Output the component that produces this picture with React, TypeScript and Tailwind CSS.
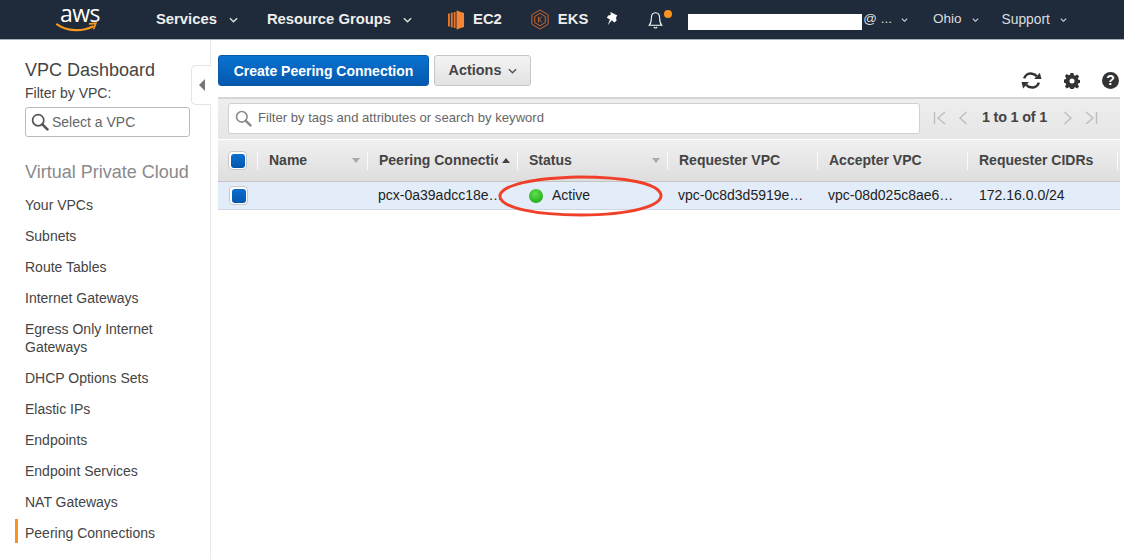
import React from "react";

const navItems = [
  "Your VPCs",
  "Subnets",
  "Route Tables",
  "Internet Gateways",
  "Egress Only Internet Gateways",
  "DHCP Options Sets",
  "Elastic IPs",
  "Endpoints",
  "Endpoint Services",
  "NAT Gateways",
  "Peering Connections",
];

const Caret = ({ className = "" }: { className?: string }) => (
  <svg viewBox="0 0 10 6" className={`w-[9px] h-[6px] ${className}`} fill="none">
    <path d="M1 1l4 4 4-4" stroke="currentColor" strokeWidth="1.6" />
  </svg>
);

const Search = ({ className = "" }: { className?: string }) => (
  <svg viewBox="0 0 18 18" className={className} fill="none">
    <circle cx="7.2" cy="7.2" r="5.6" stroke="currentColor" strokeWidth="1.7" />
    <path d="M11.4 11.4l5 5" stroke="currentColor" strokeWidth="2.6" strokeLinecap="round" />
  </svg>
);

const Checkbox = () => (
  <div className="w-[19px] h-[19px] rounded-[4px] border border-[#c8c8c8] bg-white flex items-center justify-center">
    <div className="w-[14px] h-[14px] rounded-[3px] bg-gradient-to-b from-[#0a6fd0] to-[#0457ab]" />
  </div>
);

const HeaderCell = ({
  label,
  width,
  sort,
}: {
  label: string;
  width: string;
  sort?: "down" | "up";
}) => (
  <div className={`${width} h-[18px] shrink-0 border-r border-[#fafafa] flex items-center pl-[11px] pr-[7px]`}>
    <span className="flex-1 overflow-hidden whitespace-nowrap font-bold text-[14px] text-[#444]">{label}</span>
    {sort === "down" && <span className="ml-1 w-0 h-0 border-x-[4px] border-x-transparent border-t-[5px] border-t-[#aaa]" />}
    {sort === "up" && <span className="ml-1 w-0 h-0 border-x-[4px] border-x-transparent border-b-[5px] border-b-[#444]" />}
  </div>
);

const App = () => {
  return (
    <div className="w-[1124px] h-[559px] overflow-hidden bg-white font-['Liberation_Sans',sans-serif] relative">
      {/* top bar */}
      <header className="h-[40px] bg-[#1f2b3a] border-b border-[#aab0b6] flex items-center text-white text-[14.8px]">
        <div className="ml-[57px] w-[99px] shrink-0 relative h-[39px]">
          <span className="absolute left-[3px] top-[0px] text-[23px] leading-[26px] tracking-[-0.5px] font-['Open_Sans',sans-serif]">aws</span>
          <svg viewBox="0 0 40 10" className="absolute left-[-1px] top-[22px] w-[42px] h-[11px]" fill="none">
            <path d="M1 2c10 7 24 7 34 2" stroke="#f7981d" strokeWidth="2" strokeLinecap="round" />
            <path d="M32 1.500l6-.5-2 5" stroke="#f7981d" strokeWidth="1.6" strokeLinecap="round" />
          </svg>
        </div>
        <span className="font-bold text-[#eee]">Services</span>
        <Caret className="ml-[12px] text-[#ddd]" />
        <span className="ml-[29px] font-bold text-[#eee]">Resource Groups</span>
        <Caret className="ml-[12px] text-[#ddd]" />
        <svg viewBox="0 0 18 20" className="ml-[36px] w-[17px] h-[20px]">
          <path d="M9 0l8 2.500v15L9 20z" fill="#f58536" />
          <path d="M0 3h2v14H0zM3 2.400h2v15.200H3zM6 1.600h2v16.800H6z" fill="#e8762b" />
        </svg>
        <span className="ml-[8px] font-bold text-[#eee]">EC2</span>
        <svg viewBox="0 0 20 22" className="ml-[28px] w-[20px] h-[21px]" fill="none" stroke="#d2682c">
          <path d="M10 1l8.500 5v10L10 21l-8.500-5V6z" strokeWidth="1" />
          <path d="M10 4.500l5.500 3.200v6.600L10 17.500l-5.500-3.200V7.700z" strokeWidth="1" />
          <path d="M8.500 8v6M12 8l-3 3 3 3" strokeWidth="1" />
        </svg>
        <span className="ml-[8px] font-bold text-[#eee]">EKS</span>
        <svg viewBox="0 0 16 16" className="ml-[18px] w-[14px] h-[14px] -mt-[2px]" fill="#fff">
          <path d="M5 0l8 4-1.500 2 .5 4-2.500 2-3-2.500L2 15l2.500-6.500L1 6.500 2.500 4l3-.5z" />
        </svg>
        <div className="relative ml-[27px] w-[17px] h-[21px]">
          <svg viewBox="0 0 16 20" className="w-[17px] h-[21px]" fill="none" stroke="#fff" strokeWidth="1">
            <path d="M2 15.500c1.500-1.500 2-3 2-6.500 0-3 1.500-5.500 4-5.500s4 2.500 4 5.500c0 3.500.5 5 2 6.500z" />
            <path d="M6.500 17c.5 1.500 2.500 1.500 3 0" />
          </svg>
          <span className="absolute left-[17px] top-[1px] w-[8px] h-[8px] rounded-full bg-[#f7931e]" />
        </div>
        <div className="ml-[24px] w-[174px] h-[16px] bg-white mt-[4px]" />
        <span className="ml-[1px] text-[13.5px] text-[#ddd]">@ ...</span>
        <Caret className="ml-[8px] text-[#ddd] scale-75" />
        <span className="ml-[24px] text-[13.5px] text-[#ddd]">Ohio</span>
        <Caret className="ml-[9px] text-[#ddd] scale-75" />
        <span className="ml-[22px] text-[13.8px] text-[#ddd] mt-[1px]">Support</span>
        <Caret className="ml-[9px] text-[#ddd] scale-75" />
      </header>

      <div className="flex h-[519px]">
        {/* sidebar */}
        <aside className="relative w-[211px] shrink-0 border-r border-[#eaeaea] pl-[25px] pr-[20px] pt-[20px]">
          <h1 className="text-[18px] leading-[21px] text-[#444]">VPC Dashboard</h1>
          <div className="text-[14px] leading-[18px] mt-[3px] text-[#444]">Filter by VPC:</div>
          <div className="mt-[5px] h-[30px] w-[165px] border border-[#bbb] rounded-[3px] flex items-center pl-[5px] text-[14px] text-[#666]">
            <Search className="w-[18px] h-[18px] text-[#555]" />
            <span className="ml-[3px]">Select a VPC</span>
          </div>
          <h2 className="mt-[25px] text-[18px] leading-[21px] text-[#8a8a8a]">Virtual Private Cloud</h2>
          <nav className="mt-[6px]">
            {navItems.map((item, i) => (
              <div key={item} className="relative py-[6.5px] text-[14px] leading-[18px] text-[#444] w-[150px]">
                {i === navItems.length - 1 && (
                  <span className="absolute left-[-10px] top-[2px] w-[3px] h-[24px] bg-[#f7931e]" />
                )}
                {item === "Peering Connections" ? <span className="whitespace-nowrap">{item}</span> : item}
              </div>
            ))}
          </nav>
          {/* collapse tab */}
          <div className="absolute right-[-1px] top-[25px] w-[20px] h-[40px] bg-white border border-r-0 border-[#e4e4e4] rounded-l-[5px] flex items-center justify-center">
            <span className="w-0 h-0 border-y-[6px] border-y-transparent border-r-[6px] border-r-[#777]" />
          </div>
        </aside>

        {/* main */}
        <main className="flex-1 pl-[7px] pr-[4px] pt-[15px]">
          <div className="h-[42px] flex items-start">
            <button className="h-[31px] w-[211px] pt-[1px] rounded-[3px] border border-[#0a5aa8] bg-gradient-to-b from-[#0a72d1] to-[#0459ae] text-white font-bold text-[14px]">
              Create Peering Connection
            </button>
            <button className="ml-[5px] h-[31px] w-[97px] pt-[1px] pl-[1px] rounded-[3px] border border-[#c6c6c6] bg-gradient-to-b from-[#f4f4f4] to-[#e2e2e2] text-[#444] font-bold text-[14.4px] flex items-center justify-center gap-[7px]">
              Actions
              <Caret className="text-[#555]" />
            </button>
            <div className="ml-auto mt-[15px] mr-[1px] flex items-center text-[#333]">
              <svg viewBox="0 0 20 20" className="w-[21px] h-[21px]" fill="none" stroke="currentColor" strokeWidth="2.4">
                <path d="M3 8c1-3 4-5 7.500-4.500 2 .3 3.500 1.200 4.500 2.500" />
                <path d="M17 12c-1 3-4 5-7.500 4.500-2-.3-3.500-1.200-4.500-2.500" />
                <path d="M12.500 8.500h7l-1.500-6z" fill="currentColor" stroke="none" />
                <path d="M7.500 11.500h-7l1.500 6z" fill="currentColor" stroke="none" />
              </svg>
              <svg viewBox="0 0 16 16" className="ml-[22px] w-[16px] h-[16px]" fill="currentColor">
                <path
                  fillRule="evenodd"
                  d="M6.500 0h3l.4 2.200 1.300.6L13.100 1.500l2 2-1.300 1.900.6 1.300 2.200.4v2.800l-2.200.4-.6 1.300 1.300 1.900-2 2-1.900-1.300-1.300.6-.4 2.200h-3l-.4-2.200-1.300-.6-1.900 1.300-2-2 1.300-1.900-.6-1.300L-.6 9.400V6.600l2.200-.4.600-1.300-1.300-1.900 2-2 1.900 1.300 1.300-.6zM8 5.500a2.500 2.500 0 100 5 2.500 2.500 0 000-5z"
                />
              </svg>
              <div className="ml-[22px] w-[17px] h-[17px] rounded-full bg-[#333] text-white text-[14px] leading-[17px] font-bold text-center">?</div>
            </div>
          </div>

          {/* filter toolbar */}
          <div className="h-[42px] border-t-2 border-[#d5d5d5] bg-gradient-to-b from-[#eeeeee] to-[#e6e6e6] flex items-center pl-[10px] pb-[2px]">
            <div className="w-[692px] h-[31px] bg-white border border-[#d0d0d0] rounded-[3px] flex items-center pl-[6px] text-[#666] text-[13.1px]">
              <Search className="w-[17px] h-[17px] text-[#8a8a8a]" />
              <span className="ml-[6px]">Filter by tags and attributes or search by keyword</span>
            </div>
            <div className="ml-[13px] flex items-center text-[#bdbdbd]">
              <svg viewBox="0 0 14 14" className="w-[14px] h-[14px]" fill="none" stroke="currentColor" strokeWidth="1.4">
                <path d="M1.500 1v12M12 1L5 7l7 6" />
              </svg>
              <svg viewBox="0 0 10 14" className="ml-[11px] w-[10px] h-[14px]" fill="none" stroke="currentColor" strokeWidth="1.4">
                <path d="M8.500 1L2 7l6.500 6" />
              </svg>
              <span className="ml-[14px] w-[66px] text-[14.4px] font-bold text-[#444] whitespace-nowrap tracking-[-0.2px]">1 to 1 of 1</span>
              <svg viewBox="0 0 10 14" className="ml-[15px] w-[10px] h-[14px]" fill="none" stroke="currentColor" strokeWidth="1.4">
                <path d="M1.500 1L8 7l-6.500 6" />
              </svg>
              <svg viewBox="0 0 14 14" className="ml-[11px] w-[14px] h-[14px]" fill="none" stroke="currentColor" strokeWidth="1.4">
                <path d="M12.500 1v12M2 1l7 6-7 6" />
              </svg>
            </div>
          </div>

          {/* table */}
          <div className="h-[42px] mt-[1px] border-b border-[#c4c4c4] bg-gradient-to-b from-[#f0f0f0] to-[#dedede] flex items-center">
            <div className="w-[40px] h-[18px] shrink-0 border-r border-[#fafafa] flex items-center pl-[10px]">
              <Checkbox />
            </div>
            <HeaderCell label="Name" width="w-[110px]" sort="down" />
            <HeaderCell label="Peering Connection" width="w-[150px]" sort="up" />
            <HeaderCell label="Status" width="w-[150px]" sort="down" />
            <HeaderCell label="Requester VPC" width="w-[150px]" />
            <HeaderCell label="Accepter VPC" width="w-[150px]" />
            <HeaderCell label="Requester CIDRs" width="w-[150px]" />
          </div>
          <div className="relative h-[28px] border-b border-[#cfd8e0] bg-[#e2edf9] flex items-center text-[14px] text-[#222]">
            <div className="w-[40px] shrink-0 pl-[11px]">
              <Checkbox />
            </div>
            <div className="w-[110px] shrink-0" />
            <div className="w-[150px] shrink-0 pl-[10px] pr-[15px] whitespace-nowrap overflow-hidden text-ellipsis">pcx-0a39adcc18e8a6b41</div>
            <div className="w-[150px] shrink-0 pl-[11px] flex items-center">
              <span className="w-[14px] h-[14px] rounded-full bg-[radial-gradient(circle_at_45%_35%,#5fe04a,#12a010)]" />
              <span className="ml-[9px]">Active</span>
            </div>
            <div className="w-[150px] shrink-0 pl-[10px] pr-[12px] whitespace-nowrap overflow-hidden text-ellipsis">vpc-0c8d3d5919e0c1a27</div>
            <div className="w-[150px] shrink-0 pl-[10px] pr-[12px] whitespace-nowrap overflow-hidden text-ellipsis">vpc-08d025c8ae61f3b90</div>
            <div className="w-[150px] shrink-0 pl-[11px]">172.16.0.0/24</div>
            {/* annotation around the status */}
            <svg viewBox="0 0 168 44" className="absolute left-[277px] top-[-8px] w-[172px] h-[44px]" fill="none">
              <path
                d="M3 21C6 11 35 4 82 3c45 0 80 6 82 18 1 11-31 20-80 20C40 41 1 34 3 21z"
                stroke="#f0402a"
                strokeWidth="3"
              />
            </svg>
          </div>
        </main>
      </div>
    </div>
  );
};

export default App;
